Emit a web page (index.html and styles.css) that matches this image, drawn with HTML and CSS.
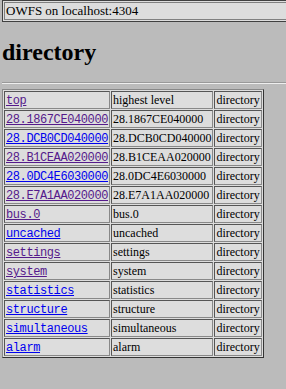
FILE: index.html
```html
<!DOCTYPE html>
<html>
<head>
<meta charset="utf-8">
<title>OWFS on localhost:4304</title>
<link rel="stylesheet" href="styles.css">
</head>
<body>
<table class="topbar">
  <tr><td class="topcell">OWFS on localhost:4304</td></tr>
</table>
<h1 class="title">directory</h1>
<hr class="rule">
<table class="dir">
  <tr><td><a class="lnk visited" href="#">top</a></td><td>highest level</td><td>directory</td></tr>
  <tr><td><a class="lnk visited" href="#">28.1867CE040000</a></td><td>28.1867CE040000</td><td>directory</td></tr>
  <tr><td><a class="lnk" href="#">28.DCB0CD040000</a></td><td>28.DCB0CD040000</td><td>directory</td></tr>
  <tr><td><a class="lnk visited" href="#">28.B1CEAA020000</a></td><td>28.B1CEAA020000</td><td>directory</td></tr>
  <tr><td><a class="lnk" href="#">28.0DC4E6030000</a></td><td>28.0DC4E6030000</td><td>directory</td></tr>
  <tr><td><a class="lnk visited" href="#">28.E7A1AA020000</a></td><td>28.E7A1AA020000</td><td>directory</td></tr>
  <tr><td><a class="lnk visited" href="#">bus.0</a></td><td>bus.0</td><td>directory</td></tr>
  <tr><td><a class="lnk" href="#">uncached</a></td><td>uncached</td><td>directory</td></tr>
  <tr><td><a class="lnk visited" href="#">settings</a></td><td>settings</td><td>directory</td></tr>
  <tr><td><a class="lnk visited" href="#">system</a></td><td>system</td><td>directory</td></tr>
  <tr><td><a class="lnk" href="#">statistics</a></td><td>statistics</td><td>directory</td></tr>
  <tr><td><a class="lnk" href="#">structure</a></td><td>structure</td><td>directory</td></tr>
  <tr><td><a class="lnk" href="#">simultaneous</a></td><td>simultaneous</td><td>directory</td></tr>
  <tr><td><a class="lnk" href="#">alarm</a></td><td>alarm</td><td>directory</td></tr>
</table>
</body>
</html>
```
FILE: styles.css
```css
html {
  overflow: hidden;
  background: #bbbbbb;
}
body {
  margin: 0 0 0 2px;
  background: #bbbbbb;
  font-family: "Liberation Serif", "Times New Roman", serif;
  font-size: 12px;
  color: #000;
}
.topbar {
  width: 310px;
  background: #dddddd;
  border: 1px solid #404040;
  border-spacing: 1px;
}
.topcell {
  border: 1px solid #808080;
  padding: 0 1px;
  font-size: 13px;
  line-height: 16px;
  height: 16px;
}
.title {
  font-size: 24px;
  font-weight: bold;
  margin: 16px 0 16px;
  line-height: 28px;
}
.rule {
  margin: 0 0 6px 0;
  width: 310px;
  border: 0;
  border-top: 1px solid #999999;
  border-bottom: 1px solid #eeeeee;
  height: 0;
}
.dir {
  background: #dddddd;
  border: 1px solid;
  border-color: #888888 #333333 #333333 #888888;
  border-spacing: 1px;
  margin-top: -1px;
}
.dir td {
  border: 1px solid;
  border-color: #555555 #888888 #888888 #555555;
  padding: 0 1px;
  line-height: 16px;
  height: 16px;
  white-space: nowrap;
}
.lnk {
  font-family: "Liberation Mono", "Courier New", monospace;
  font-size: 12px;
  letter-spacing: -0.4px;
  line-height: 1;
  color: #0000ee;
  text-decoration: underline;
}
.lnk.visited {
  color: #551a8b;
}
```
